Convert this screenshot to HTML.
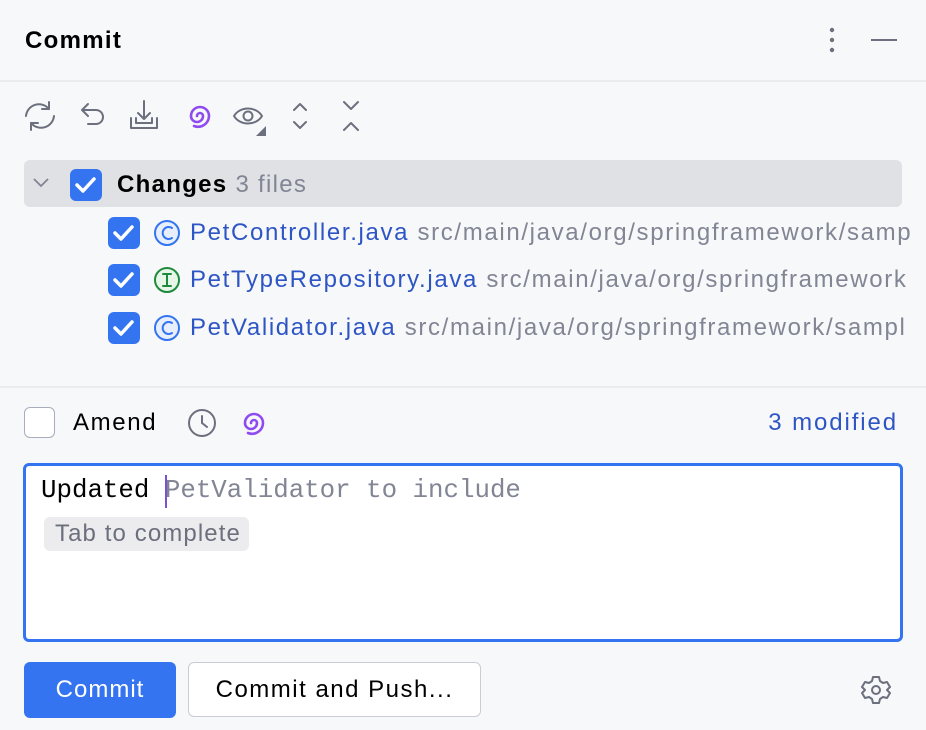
<!DOCTYPE html>
<html><head><style>
html,body{margin:0;width:926px;height:730px;overflow:hidden}
body{background:#f7f8fa;font-family:"Liberation Sans",sans-serif}
#w{position:relative;width:926px;height:730px;overflow:hidden}
.a{position:absolute}
.cb{position:absolute;width:32px;height:32px;border-radius:6px;background:#3574f0}
.t{position:absolute;font-size:24px;white-space:nowrap;line-height:30px;letter-spacing:1.65px}
</style></head><body><div id="w">
<div class="t" style="left:25px;top:26px;font-weight:bold;color:#000;letter-spacing:1.3px">Commit</div>
<svg class="a" style="left:820px;top:24px" width="80" height="34">
<circle cx="12" cy="6" r="2.2" fill="#6c707e"/><circle cx="12" cy="16" r="2.2" fill="#6c707e"/><circle cx="12" cy="26" r="2.2" fill="#6c707e"/>
<line x1="51" y1="16" x2="77" y2="16" stroke="#6c707e" stroke-width="2"/></svg>
<div class="a" style="left:0;top:80px;width:926px;height:2px;background:#ebecf0"></div>
<svg class="a" style="left:20px;top:96px" width="360" height="40" fill="none" stroke="#6c707e" stroke-width="2" stroke-linecap="round" stroke-linejoin="round">
<path d="M6 20a13 13 0 0 1 23-7M34 20a13 13 0 0 1-23 7"/><path d="M29 6v7h-7M11 34v-7h7"/>
<path d="M68 8l-6 6 6 6M62 14h14a7 7 0 0 1 0 14h-8"/>
<path d="M111 22v10h26v-10M116 22v5h16v-5M124 5v18M118 17l6 6 6-6"/>
<path stroke="#8e4cf0" stroke-width="2.6" d="M177 20a3 3 0 0 1 6 0a6 6 0 0 1-12 0a9 9 0 0 1 18 0a11 11 0 0 1-15 10"/>
<path d="M214 20c6-10 22-10 28 0c-6 10-22 10-28 0z"/><circle cx="228" cy="20" r="4.5"/>
<path d="M274 14l6-6 6 6M274 26l6 6 6-6"/>
<path d="M324 6l7 7 7-7M324 34l7-7 7 7"/>
</svg>
<svg class="a" style="left:256px;top:126px" width="10" height="10"><path d="M10 0v10H0z" fill="#6c707e"/></svg>
<div class="a" style="left:24px;top:160px;width:878px;height:47px;background:#dfe1e5;border-radius:6px"></div>
<svg class="a" style="left:32px;top:177px" width="18" height="12"><path d="M2 2l7 7 7-7" fill="none" stroke="#818594" stroke-width="1.8"/></svg>
<div class="cb" style="left:70px;top:169px"></div>
<div class="t" style="left:117px;top:170px;font-weight:bold;color:#000;letter-spacing:1.3px">Changes <span style="font-weight:normal;color:#818594">3 files</span></div>
<div class="cb" style="left:108px;top:217px"></div>
<div class="cb" style="left:108px;top:264px"></div>
<div class="cb" style="left:108px;top:312px"></div>
<svg class="a" style="left:0;top:0" width="926" height="730" fill="none" stroke="#fff" stroke-width="3.5" stroke-linecap="round" stroke-linejoin="round">
<path d="M77 185l6 6 11-12M115 233l6 6 11-12M115 280l6 6 11-12M115 328l6 6 11-12"/>
<g stroke-width="2"><circle cx="167" cy="233" r="12" fill="#e7effd" stroke="#3574f0"/><circle cx="167" cy="280" r="12" fill="#e6f7e9" stroke="#208a3c"/><circle cx="167" cy="328" r="12" fill="#e7effd" stroke="#3574f0"/>
<path d="M172 228a6 6 0 1 0 0 10M172 323a6 6 0 1 0 0 10" stroke="#3574f0"/>
<path d="M163 274h8M167 274v12M163 286h8" stroke="#208a3c"/></g>
</svg>
<div class="t" style="left:190px;top:218px;color:#2e55c4">PetController.java <span style="color:#818594">src/main/java/org/springframework/samp</span></div>
<div class="t" style="left:190px;top:265px;color:#2e55c4">PetTypeRepository.java <span style="color:#818594">src/main/java/org/springframework</span></div>
<div class="t" style="left:190px;top:313px;color:#2e55c4">PetValidator.java <span style="color:#818594">src/main/java/org/springframework/sampl</span></div>
<div class="a" style="left:0;top:386px;width:926px;height:2px;background:#ebecf0"></div>
<div class="a" style="left:24px;top:407px;width:29px;height:29px;border:1.5px solid #a8adbd;border-radius:6px;background:#fff"></div>
<div class="t" style="left:73px;top:408px;color:#000">Amend</div>
<svg class="a" style="left:186px;top:407px" width="90" height="32" fill="none" stroke-width="2" stroke-linecap="round">
<circle cx="16" cy="16" r="13" stroke="#6c707e"/><path d="M16 9v7l5 4" stroke="#6c707e"/>
<path stroke="#8e4cf0" stroke-width="2.6" d="M65 16a3 3 0 0 1 6 0a6 6 0 0 1-12 0a9 9 0 0 1 18 0a11 11 0 0 1-15 10"/>
</svg>
<div class="t" style="right:28px;top:408px;color:#2e55c4;letter-spacing:1.9px">3 modified</div>
<div class="a" style="left:23px;top:463px;width:874px;height:173px;border:3px solid #3574f0;border-radius:6px;background:#fff"></div>
<div class="t" style="left:41px;top:476px;font-family:'Liberation Mono',monospace;font-size:25.8px;letter-spacing:0;color:#000">Updated <span style="color:#818594">PetValidator to include</span></div>
<div class="a" style="left:165px;top:475px;width:2px;height:33px;background:#7b4fd6"></div>
<div class="a" style="left:44px;top:517px;width:205px;height:34px;background:#ececee;border-radius:6px"></div>
<div class="t" style="left:55px;top:519px;color:#6c707e;letter-spacing:1.1px">Tab to complete</div>
<div class="a" style="left:24px;top:662px;width:152px;height:56px;background:#3574f0;border-radius:6px;color:#fff;font-size:24px;line-height:56px;text-align:center;letter-spacing:1px">Commit</div>
<div class="a" style="left:188px;top:662px;width:291px;height:53px;border:1.5px solid #c9ccd6;background:#fff;border-radius:6px;color:#000;font-size:24px;line-height:53px;text-align:center;letter-spacing:1.5px">Commit and Push...</div>
<svg class="a" style="left:861px;top:675px" width="30" height="30" fill="none" stroke="#6c707e" stroke-width="2" stroke-linejoin="round">
<path d="M12 2h6l1 4 3 2 4-1 3 5-3 3v0l3 3-3 5-4-1-3 2-1 4h-6l-1-4-3-2-4 1-3-5 3-3-3-3 3-5 4 1 3-2z"/><circle cx="15" cy="15" r="4"/></svg>
</div></body></html>
